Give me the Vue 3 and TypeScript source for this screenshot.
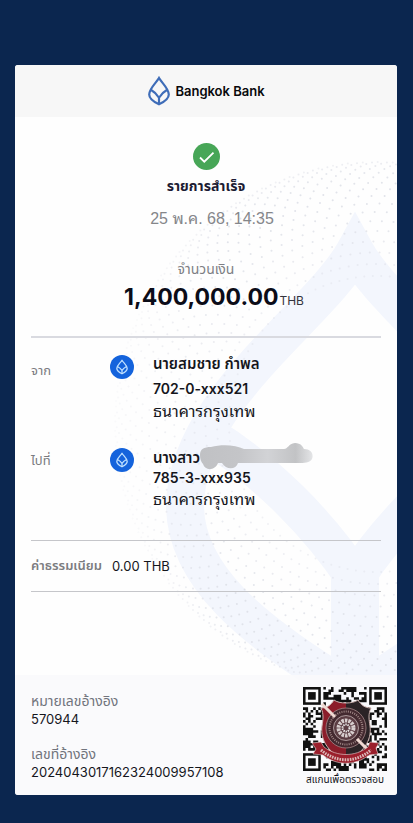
<script setup lang="ts">
interface Party {
  role: string
  name: string
  account: string
  bank: string
  redacted: boolean
}

interface Dot {
  x: number
  y: number
  r: number
  o: number
}

const parties: Party[] = [
  { role: 'จาก', name: 'นายสมชาย กำพล', account: '702-0-xxx521', bank: 'ธนาคารกรุงเทพ', redacted: false },
  { role: 'ไปที่', name: 'นางสาว', account: '785-3-xxx935', bank: 'ธนาคารกรุงเทพ', redacted: true },
]

const references = [
  { label: 'หมายเลขอ้างอิง', value: '570944' },
  { label: 'เลขที่อ้างอิง', value: '2024043017162324009957108' },
]

/* Dotted globe: rings close up towards the rim like the meridians of a sphere. */
const dots: Dot[] = []
for (let ring = 0; ring < 18; ring++) {
  const t = ring / 17
  const radius = 262 * Math.sin(0.6 + t * 0.97)
  for (let k = 0; k < 110; k++) {
    const a = (k / 110) * Math.PI * 2 + ring * 0.022
    const x = 362 + radius * Math.cos(a)
    const y = 359 + radius * Math.sin(a)
    if (x < 0 || x > 382 || y < 0 || y > 609) continue
    const fade = Math.min(1, Math.max(0.3, (x - 80) / 130))
    dots.push({
      x: Math.round(x * 10) / 10,
      y: Math.round(y * 10) / 10,
      r: 1,
      o: Math.round((0.4 + 0.45 * Math.sin(t * Math.PI)) * fade * 100) / 100,
    })
  }
}

/* Decorative module grid with three finder squares. */
const SIZE = 33
let seed = 77
function next(): number {
  seed = (seed * 1103515245 + 12345) % 2147483648
  return seed / 2147483648
}
function inFinder(x: number, y: number): boolean {
  return (x < 8 && y < 8) || (x > SIZE - 9 && y < 8) || (x < 8 && y > SIZE - 9)
}
let modules = ''
for (let y = 0; y < SIZE; y++) {
  for (let x = 0; x < SIZE; x++) {
    if (next() < 0.5 && !inFinder(x, y)) modules += `M${x} ${y}h1v1h-1z`
  }
}
const finders = [[0, 0], [SIZE - 7, 0], [0, SIZE - 7]]
</script>

<template>
  <main class="screen">
    <article class="slip">
      <svg class="watermark" viewBox="0 0 382 729" aria-hidden="true">
        <g class="leaf">
          <path d="M340 186C305 250 172 335 170 440C170 510 235 565 340 628C445 565 510 510 510 440C508 335 375 250 340 186Z" />
          <path d="M196 372C250 405 305 460 340 514C375 460 430 405 484 372" />
          <path class="stem" d="M340 506V628" />
        </g>
        <g fill="#dcdee6">
          <circle v-for="(d, i) in dots" :key="i" :cx="d.x" :cy="d.y" :r="d.r" :opacity="d.o" />
        </g>
      </svg>

      <header class="brand">
        <svg class="brand-mark" viewBox="0 0 24 30" aria-hidden="true">
          <path d="M12 2C9.500 6.500 2.200 12.500 2.200 18.500C2.200 22.500 6 25.500 12 28.300C18 25.500 21.800 22.500 21.800 18.500C21.800 12.500 14.500 6.500 12 2Z" />
          <path d="M3.500 13.500C7 15.500 10 18.500 12 21.800C14 18.500 17 15.500 20.500 13.500M12 21.500V28" />
        </svg>
        <span>Bangkok Bank</span>
      </header>

      <section class="summary">
        <svg class="check" viewBox="0 0 27 27" aria-hidden="true">
          <circle cx="13.500" cy="13.500" r="13.500" fill="#47a657" />
          <path d="M7 14.500L11.300 18.700L20.500 9.700" fill="none" stroke="#fff" stroke-width="1.800" />
        </svg>
        <h1 class="status">รายการสำเร็จ</h1>
        <time class="date">25 พ.ค. 68, 14:35</time>
        <p class="amount-label">จำนวนเงิน</p>
        <p class="amount"><strong>1,400,000.00</strong><span>THB</span></p>
      </section>

      <section class="parties">
        <div v-for="p in parties" :key="p.account" class="party" :class="{ compact: p.redacted }">
          <span class="role">{{ p.role }}</span>
          <svg class="bank-icon" viewBox="0 0 24 24" aria-hidden="true">
            <circle cx="12" cy="12" r="12" fill="#1463dc" />
            <g fill="none" stroke="#bfe0ff" stroke-width="1.300" stroke-linejoin="round">
              <path d="M12 5.200C10.500 8 6.800 10.300 6.800 13.500C6.800 15.800 9 17.200 12 18.800C15 17.200 17.200 15.800 17.200 13.500C17.200 10.300 13.500 8 12 5.200Z" />
              <path d="M7.500 11.500C9.500 12.500 11 13.700 12 15.500C13 13.700 14.500 12.500 16.500 11.500M12 15.500V18.500" />
            </g>
          </svg>
          <div class="details">
            <div class="name">
              {{ p.name }}
              <svg v-if="p.redacted" class="smudge" viewBox="0 0 114 28" aria-hidden="true">
                <defs>
                  <linearGradient id="smudge-fill" x1="0" x2="1" y1="0" y2="0">
                    <stop offset="0" stop-color="#c0c1c4" />
                    <stop offset="0.350" stop-color="#c4c5c8" />
                    <stop offset="0.600" stop-color="#d2d3d6" />
                    <stop offset="0.850" stop-color="#c2c3c5" />
                    <stop offset="1" stop-color="#e4e5e7" />
                  </linearGradient>
                </defs>
                <path fill="url(#smudge-fill)" d="M0 12C0 6 4 4 11 4C22 1 36 2 44 6H84C88 6 88 1 95 0C101 0 103 4 104 6C111 6 114 11 112 16C110 20 104 20 98 20H38C36 27 26 27 22 20H18C15 28 5 28 3 21C1 19 0 16 0 12Z" />
              </svg>
            </div>
            <div class="account">{{ p.account }}</div>
            <div class="bank">{{ p.bank }}</div>
          </div>
        </div>
      </section>

      <section class="fee">
        <span class="fee-label">ค่าธรรมเนียม</span>
        <span>0.00 THB</span>
      </section>

      <footer class="footer">
        <dl class="refs">
          <div v-for="r in references" :key="r.value">
            <dt>{{ r.label }}</dt>
            <dd>{{ r.value }}</dd>
          </div>
        </dl>
        <figure class="verify">
          <svg class="code" viewBox="0 0 84 84" role="img" aria-label="QR">
            <g transform="scale(2.545)" fill="#111">
              <path :d="modules" />
              <g v-for="(f, i) in finders" :key="i">
                <rect :x="f[0] + 0.5" :y="f[1] + 0.5" width="6" height="6" fill="none" stroke="#111" />
                <rect :x="f[0] + 2" :y="f[1] + 2" width="3" height="3" />
              </g>
            </g>
            <clipPath id="shield-clip">
              <path d="M18 21C24 21 28 18 31 13C36 17 50 17 55 13C58 18 62 21 68 21C65 27 66 33 67 39C69 54 60 66 43 74C26 66 17 54 19 39C20 33 21 27 18 21Z" />
            </clipPath>
            <g clip-path="url(#shield-clip)">
              <rect x="15" y="10" width="56" height="66" fill="#8c1d2a" />
              <path d="M43 10H71V76H43V40Z" fill="#2b2326" />
            </g>
            <path class="shield-edge" d="M18 21C24 21 28 18 31 13C36 17 50 17 55 13C58 18 62 21 68 21C65 27 66 33 67 39C69 54 60 66 43 74C26 66 17 54 19 39C20 33 21 27 18 21Z" />
            <circle cx="43" cy="41" r="20" fill="#43292f" stroke="#a48788" stroke-width="0.800" />
            <circle cx="43" cy="41" r="16.500" fill="none" stroke="#a08786" stroke-width="2" stroke-dasharray="1 1.200" />
            <path d="M19 17L32 30M54 52L64 62" stroke="#f0d9d2" stroke-width="3" />
            <circle cx="43" cy="41" r="12.500" fill="#5b3d43" stroke="#d1c3c3" stroke-width="0.700" />
            <circle cx="43" cy="41" r="7.500" fill="none" stroke="#d8cfcf" stroke-width="4" stroke-dasharray="2.500 0.900" />
            <circle cx="43" cy="41" r="3.500" fill="none" stroke="#eee" stroke-width="2" stroke-dasharray="1.400 0.800" />
            <path d="M9 56L18 55L21 60C34 70 52 70 65 60L67 55L76 56L73 61L75 67L66 68C52 79 34 79 20 68L10 67L13 62Z" fill="#9b1f2c" stroke="#ead7d5" stroke-width="0.600" />
            <path d="M18 63C33 76 53 76 68 63" fill="none" stroke="#dcb9b8" stroke-width="3" stroke-dasharray="1.600 1" />
          </svg>
          <figcaption>สแกนเพื่อตรวจสอบ</figcaption>
        </figure>
      </footer>
    </article>
  </main>
</template>

<style>
body {
  margin: 0;
  background: #0b264f;
}
</style>

<style scoped>
.screen {
  box-sizing: border-box;
  min-height: 100vh;
  padding: 65px 16px 29px 15px;
  background: #0b264f;
  font-family: Inter, "Noto Sans Thai", "Noto Sans", sans-serif;
  color: #15161c;
}
.slip {
  position: relative;
  overflow: hidden;
  border-radius: 3px;
  background: #fefefe;
}
.slip > * {
  position: relative;
}
.slip > .watermark {
  position: absolute;
  top: 0;
  right: 0;
  width: 382px;
}
.leaf path {
  fill: none;
  stroke: #f3f6fd;
  stroke-width: 38;
}
.leaf .stem {
  stroke-width: 48;
}
.brand {
  display: flex;
  align-items: center;
  justify-content: center;
  gap: 4px;
  height: 52px;
  background: #f7f7f7;
  font-size: 13px;
  font-weight: 600;
  color: #08090c;
}
.brand-mark {
  width: 24px;
  height: 30px;
}
.brand-mark path {
  fill: none;
  stroke: #3f6db8;
  stroke-width: 2.2;
}
.summary {
  display: flex;
  flex-direction: column;
  align-items: center;
  padding: 26px 16px 0;
}
.summary p {
  margin: 0;
}
.check {
  width: 27px;
  height: 27px;
}
.status {
  margin: 4px 0 0;
  font-size: 14px;
  line-height: 24px;
  font-weight: 700;
  color: #1c1c33;
}
.date {
  margin: 9px 0 0 12px;
  font-family: "Liberation Sans", "Noto Sans Thai Looped", Loma, sans-serif;
  font-size: 16px;
  line-height: 24px;
  color: #85868a;
}
.amount-label {
  padding-top: 26px;
  font-size: 14px;
  line-height: 24px;
  color: #7d7e84;
}
.amount {
  display: flex;
  align-items: baseline;
  gap: 1px;
  padding-left: 16px;
  line-height: 32px;
  color: #0b0c18;
}
.amount strong {
  font-size: 23px;
}
.amount span {
  font-size: 12px;
  color: #33343c;
}
.parties {
  display: flex;
  flex-direction: column;
  gap: 29px;
  margin: 19px 16px 0;
  padding: 13px 0 32px;
  border-top: 2px solid #d9dae0;
}
.party {
  display: grid;
  grid-template-columns: 60px 24px 1fr;
  column-gap: 19px;
  align-items: start;
}
.role {
  padding-top: 7px;
  font-size: 13px;
  line-height: 24px;
  color: #7a7b80;
}
.bank-icon {
  width: 24px;
  height: 24px;
  margin-top: 4px;
}
.name {
  position: relative;
  width: max-content;
  font-size: 15px;
  line-height: 26px;
  font-weight: 600;
}
.account {
  font-size: 14px;
  line-height: 24px;
  font-weight: 600;
}
.bank {
  font-family: "Noto Sans Thai Looped", Loma, Inter, "Noto Sans Thai", sans-serif;
  font-size: 16px;
  line-height: 18px;
}
.compact .role {
  padding-top: 0;
}
.compact .bank-icon {
  margin-top: 0;
}
.compact .name,
.compact .account,
.compact .bank {
  line-height: 20px;
}
.smudge {
  position: absolute;
  top: -5px;
  left: 100%;
  width: 114px;
  height: 28px;
}
.fee {
  display: flex;
  align-items: center;
  gap: 10px;
  height: 50px;
  margin: 0 16px;
  border-top: 1px solid #c5c6ca;
  border-bottom: 1px solid #c5c6ca;
  font-size: 13px;
}
.fee-label {
  font-weight: 600;
  color: #7b7c80;
}
.footer {
  display: flex;
  justify-content: space-between;
  margin-top: 83px;
  padding: 12px 10px 8px 16px;
  background: rgba(249, 249, 251, 0.85);
}
.refs {
  display: flex;
  flex-direction: column;
  gap: 17px;
  margin: 0;
  padding-top: 5px;
}
.refs dt {
  font-size: 14px;
  line-height: 18px;
  color: #71747c;
}
.refs dd {
  margin: 0;
  font-size: 13px;
  line-height: 18px;
}
.verify {
  display: flex;
  flex-direction: column;
  align-items: center;
  margin: 0;
}
.code {
  width: 84px;
  height: 84px;
}
.shield-edge {
  fill: none;
  stroke: #c9b4b1;
  stroke-width: 1;
}
.verify figcaption {
  font-size: 10px;
  line-height: 16px;
  white-space: nowrap;
}
</style>
